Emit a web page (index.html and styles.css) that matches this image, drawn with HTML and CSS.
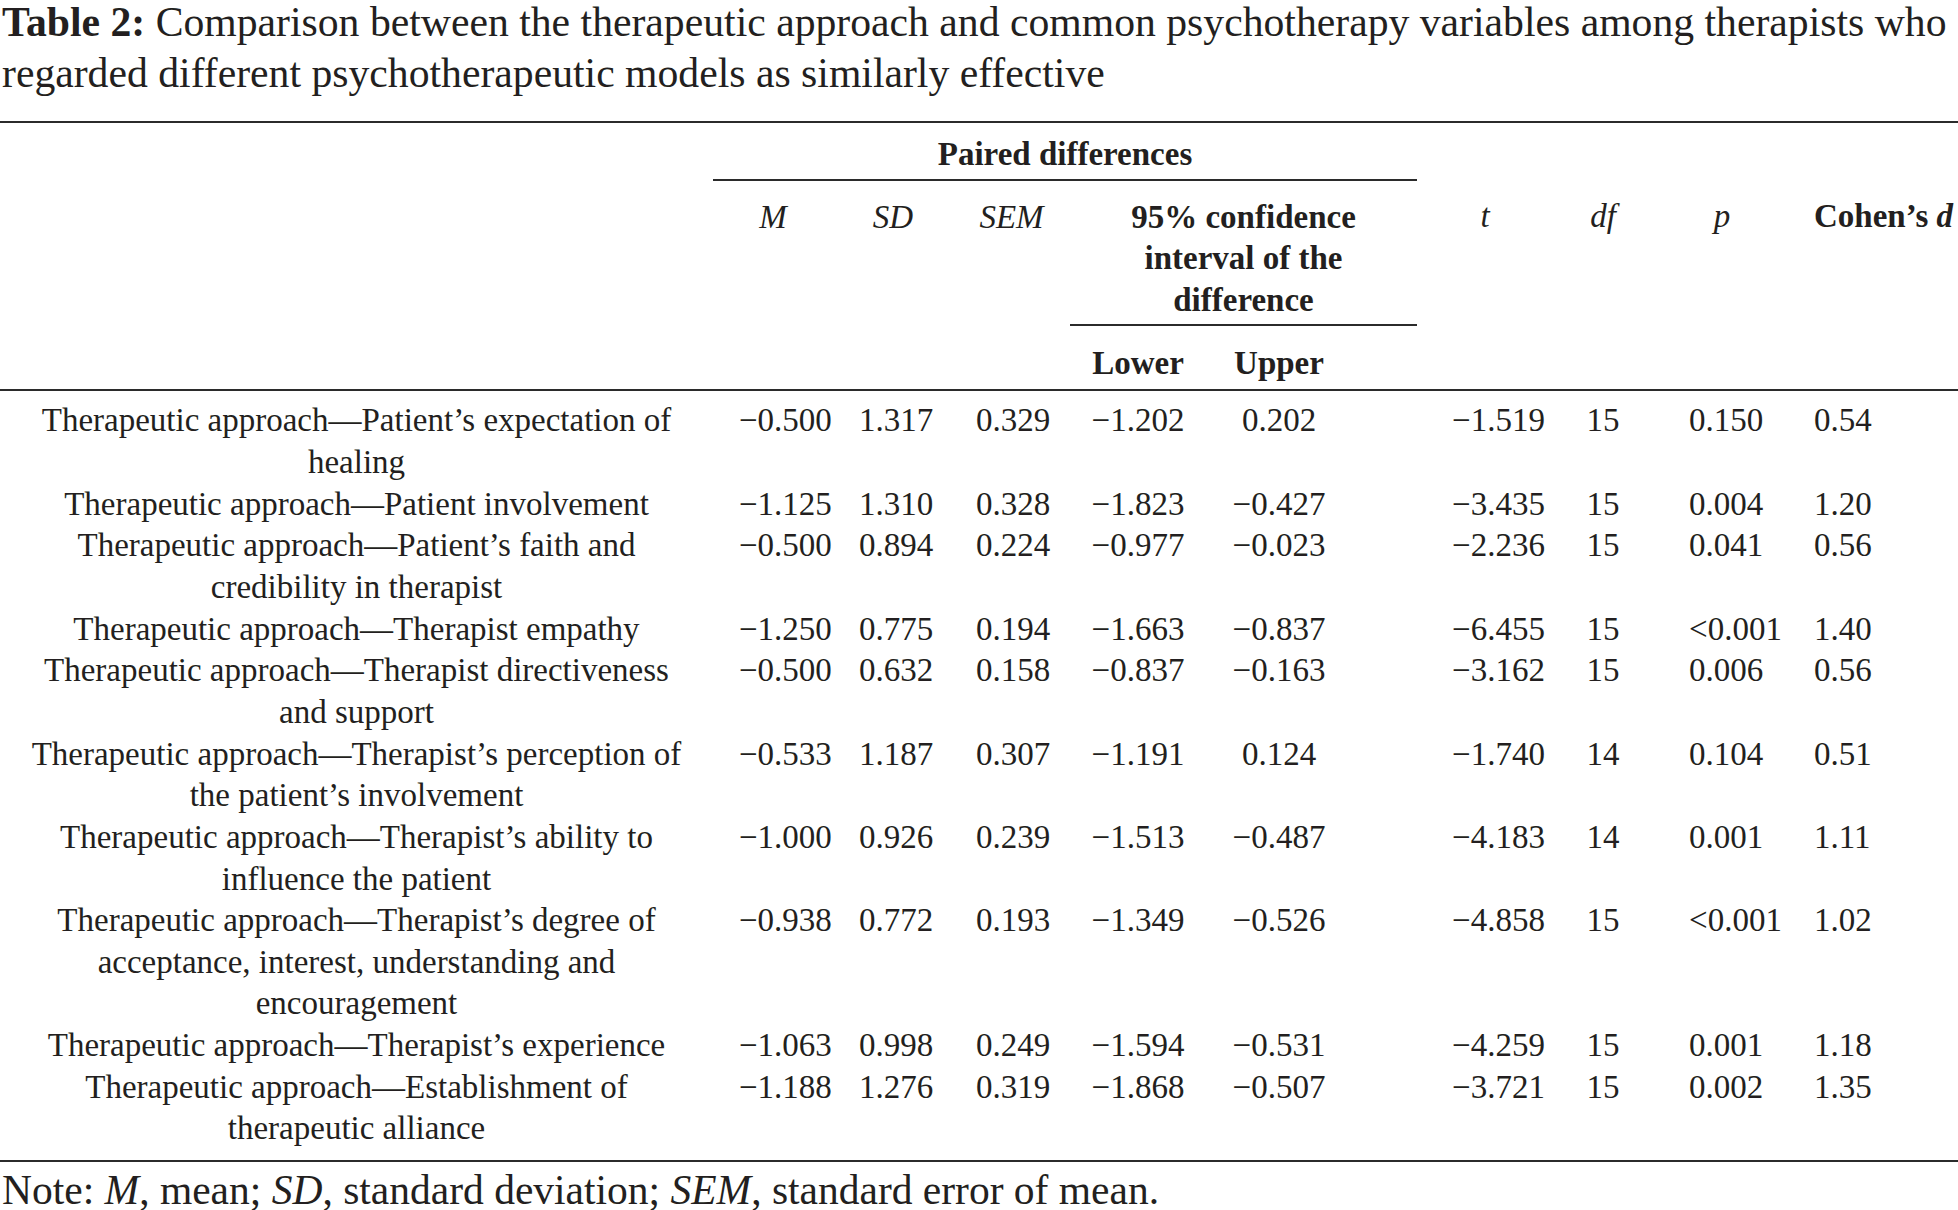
FILE: index.html
```html
<!DOCTYPE html>
<html lang="en">
<head>
<meta charset="utf-8">
<title>Table 2</title>
<link rel="stylesheet" href="styles.css">
</head>
<body>
<p class="caption"><b>Table 2:</b> Comparison between the therapeutic approach and common psychotherapy variables among therapists who regarded different psychotherapeutic models as similarly effective</p>
<table class="stats">
  <colgroup>
    <col class="c-label">
    <col class="c-m">
    <col class="c-sd">
    <col class="c-sem">
    <col class="c-lower">
    <col class="c-upper">
    <col class="c-t">
    <col class="c-df">
    <col class="c-p">
    <col class="c-d">
  </colgroup>
  <thead>
    <tr class="h1">
      <th rowspan="3"></th>
      <th colspan="5" class="group">Paired differences</th>
      <th colspan="4"></th>
    </tr>
    <tr class="h2">
      <th rowspan="2" class="ctr"><i>M</i></th>
      <th rowspan="2" class="ctr"><i>SD</i></th>
      <th rowspan="2" class="ctr"><i>SEM</i></th>
      <th colspan="2" class="group ci">95% confidence<br>interval of the<br>difference</th>
      <th rowspan="2" class="ctr"><i>t</i></th>
      <th rowspan="2" class="ctr"><i>df</i></th>
      <th rowspan="2" class="ctr"><i>p</i></th>
      <th rowspan="2" class="cohen">Cohen’s <i>d</i></th>
    </tr>
    <tr class="h3">
      <th class="ctr">Lower</th>
      <th class="upper">Upper</th>
    </tr>
  </thead>
  <tbody>
    <tr>
      <td class="label">Therapeutic approach—Patient’s expectation of<br>healing</td>
      <td class="n-m">−0.500</td><td class="n-sd">1.317</td><td class="n-sem">0.329</td>
      <td class="ctr">−1.202</td><td class="upper">0.202</td>
      <td class="n-t">−1.519</td><td class="ctr">15</td><td class="n-p">0.150</td><td class="n-d">0.54</td>
    </tr>
    <tr>
      <td class="label">Therapeutic approach—Patient involvement</td>
      <td class="n-m">−1.125</td><td class="n-sd">1.310</td><td class="n-sem">0.328</td>
      <td class="ctr">−1.823</td><td class="upper">−0.427</td>
      <td class="n-t">−3.435</td><td class="ctr">15</td><td class="n-p">0.004</td><td class="n-d">1.20</td>
    </tr>
    <tr>
      <td class="label">Therapeutic approach—Patient’s faith and<br>credibility in therapist</td>
      <td class="n-m">−0.500</td><td class="n-sd">0.894</td><td class="n-sem">0.224</td>
      <td class="ctr">−0.977</td><td class="upper">−0.023</td>
      <td class="n-t">−2.236</td><td class="ctr">15</td><td class="n-p">0.041</td><td class="n-d">0.56</td>
    </tr>
    <tr>
      <td class="label">Therapeutic approach—Therapist empathy</td>
      <td class="n-m">−1.250</td><td class="n-sd">0.775</td><td class="n-sem">0.194</td>
      <td class="ctr">−1.663</td><td class="upper">−0.837</td>
      <td class="n-t">−6.455</td><td class="ctr">15</td><td class="n-p">&lt;0.001</td><td class="n-d">1.40</td>
    </tr>
    <tr>
      <td class="label">Therapeutic approach—Therapist directiveness<br>and support</td>
      <td class="n-m">−0.500</td><td class="n-sd">0.632</td><td class="n-sem">0.158</td>
      <td class="ctr">−0.837</td><td class="upper">−0.163</td>
      <td class="n-t">−3.162</td><td class="ctr">15</td><td class="n-p">0.006</td><td class="n-d">0.56</td>
    </tr>
    <tr>
      <td class="label">Therapeutic approach—Therapist’s perception of<br>the patient’s involvement</td>
      <td class="n-m">−0.533</td><td class="n-sd">1.187</td><td class="n-sem">0.307</td>
      <td class="ctr">−1.191</td><td class="upper">0.124</td>
      <td class="n-t">−1.740</td><td class="ctr">14</td><td class="n-p">0.104</td><td class="n-d">0.51</td>
    </tr>
    <tr>
      <td class="label">Therapeutic approach—Therapist’s ability to<br>influence the patient</td>
      <td class="n-m">−1.000</td><td class="n-sd">0.926</td><td class="n-sem">0.239</td>
      <td class="ctr">−1.513</td><td class="upper">−0.487</td>
      <td class="n-t">−4.183</td><td class="ctr">14</td><td class="n-p">0.001</td><td class="n-d">1.11</td>
    </tr>
    <tr>
      <td class="label">Therapeutic approach—Therapist’s degree of<br>acceptance, interest, understanding and<br>encouragement</td>
      <td class="n-m">−0.938</td><td class="n-sd">0.772</td><td class="n-sem">0.193</td>
      <td class="ctr">−1.349</td><td class="upper">−0.526</td>
      <td class="n-t">−4.858</td><td class="ctr">15</td><td class="n-p">&lt;0.001</td><td class="n-d">1.02</td>
    </tr>
    <tr>
      <td class="label">Therapeutic approach—Therapist’s experience</td>
      <td class="n-m">−1.063</td><td class="n-sd">0.998</td><td class="n-sem">0.249</td>
      <td class="ctr">−1.594</td><td class="upper">−0.531</td>
      <td class="n-t">−4.259</td><td class="ctr">15</td><td class="n-p">0.001</td><td class="n-d">1.18</td>
    </tr>
    <tr>
      <td class="label">Therapeutic approach—Establishment of<br>therapeutic alliance</td>
      <td class="n-m">−1.188</td><td class="n-sd">1.276</td><td class="n-sem">0.319</td>
      <td class="ctr">−1.868</td><td class="upper">−0.507</td>
      <td class="n-t">−3.721</td><td class="ctr">15</td><td class="n-p">0.002</td><td class="n-d">1.35</td>
    </tr>
  </tbody>
</table>
<p class="note">Note: <i>M</i>, mean; <i>SD</i>, standard deviation; <i>SEM</i>, standard error of mean.</p>
</body>
</html>
```

FILE: styles.css
```css
html, body {
  margin: 0;
  padding: 0;
  background: #ffffff;
}

body {
  font-family: "Liberation Serif", "Times New Roman", serif;
  color: #231f20;
  width: 1958px;
}

.caption {
  font-size: 41.7px;
  line-height: 51px;
  margin: -3px 0 22px 2px;
}

.caption b {
  font-weight: 700;
}

.stats {
  width: 1958px;
  table-layout: fixed;
  border-collapse: collapse;
  border-top: 2px solid #2b2b2b;
  border-bottom: 2px solid #2b2b2b;
  font-size: 33px;
  line-height: 41.65px;
}

.c-label { width: 713px; }
.c-m { width: 120px; }
.c-sd { width: 120px; }
.c-sem { width: 117px; }
.c-lower { width: 136px; }
.c-upper { width: 211px; }
.c-t { width: 136px; }
.c-df { width: 100px; }
.c-p { width: 138px; }
.c-d { width: 167px; }

.stats thead {
  border-bottom: 2px solid #2b2b2b;
}

.stats th {
  font-weight: 700;
  padding: 0;
  vertical-align: top;
  white-space: nowrap;
}

.stats th i {
  font-weight: 400;
}

.stats th.cohen i {
  font-weight: 700;
}

.stats td {
  padding: 0;
  vertical-align: top;
  white-space: nowrap;
}

.h1 th {
  padding-top: 11px;
  padding-bottom: 3px;
}

.h1 th.group,
.h2 th.group {
  text-align: center;
  border-bottom: 2px solid #2b2b2b;
}

.h2 th {
  padding-top: 16px;
  padding-bottom: 2px;
}

.h3 th {
  padding-top: 17px;
  padding-bottom: 5px;
}

.ctr {
  text-align: center;
}

.upper {
  text-align: center;
  padding-right: 65px !important;
}

.cohen {
  text-align: left;
  padding-left: 23px !important;
}

.label {
  text-align: center;
}

.n-m, .n-sd { padding-left: 26px !important; }
.n-sem { padding-left: 23px !important; }
.n-t { padding-left: 35px !important; }
.n-p { padding-left: 36px !important; }
.n-d { padding-left: 23px !important; }

.stats tbody tr:first-child td {
  padding-top: 9px;
}

.stats tbody tr:last-child td {
  padding-bottom: 10px;
}

.note {
  font-size: 41.5px;
  line-height: 50px;
  margin: 3px 0 0 2px;
}
```
